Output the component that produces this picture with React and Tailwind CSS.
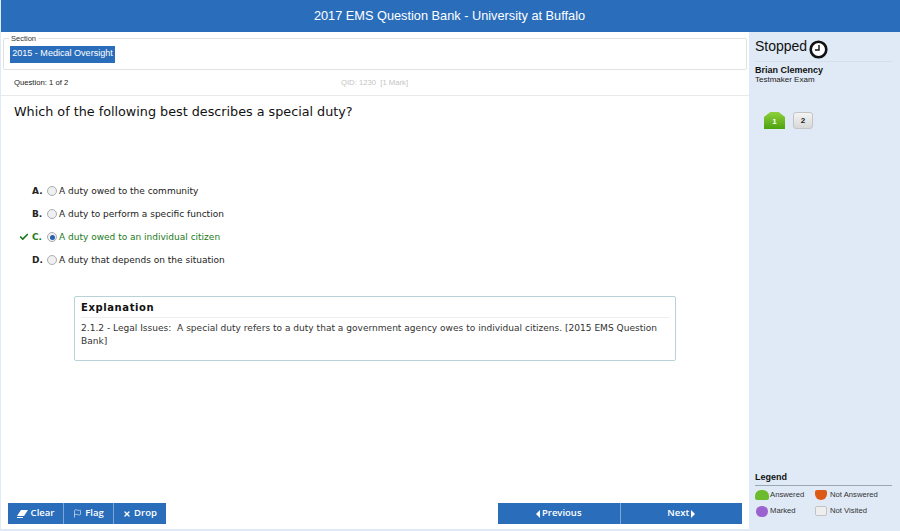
import { Check, X, Flag } from 'lucide-react';

const choices = [
  { letter: 'A.', text: 'A duty owed to the community' },
  { letter: 'B.', text: 'A duty to perform a specific function' },
  { letter: 'C.', text: 'A duty owed to an individual citizen', correct: true },
  { letter: 'D.', text: 'A duty that depends on the situation' },
];

const Radio = ({ checked }) => (
  <span className="flex h-[10px] w-[10px] shrink-0 items-center justify-center rounded-full border border-[#a8aeb4] bg-[#f0f0f0]">
    {checked && <span className="h-[5px] w-[5px] rounded-full bg-[#2a5fb0]" />}
  </span>
);

const Clock = () => (
  <svg width="19" height="19" viewBox="0 0 19 19" className="mt-[3px]">
    <circle cx="9.5" cy="9.5" r="7.8" fill="white" stroke="#111" strokeWidth="2.6" />
    <path d="M10 5v5H6" fill="none" stroke="#111" strokeWidth="1.4" />
  </svg>
);

const EraserIcon = () => (
  <svg width="11" height="8" viewBox="0 0 11 8">
    <path d="M4 0h7L7 6H0z" fill="white" />
    <path d="M0 7h6v1H0z" fill="white" />
  </svg>
);

const App = () => {
  return (
    <div className="flex h-[531px] w-[900px] flex-col overflow-hidden bg-[#e0eaf6] pb-[2px] pl-[1px] font-['Liberation_Sans',sans-serif] text-black">
      <header className="flex h-[32px] shrink-0 items-center justify-center bg-[#2a6ebb] pr-[2px] text-[12.75px] text-white">
        2017 EMS Question Bank - University at Buffalo
      </header>

      <div className="flex min-h-0 flex-1">
        <main className="flex w-[748px] shrink-0 flex-col bg-white">
          <fieldset className="mx-[2px] mt-[1.5px] h-[36.5px] shrink-0 rounded-[2px] border border-[#e2e2e2] pl-[6px]">
            <legend className="-ml-[1px] bg-white px-[2px] text-[7.5px] leading-[9px] text-[#333]">Section</legend>
            <div className="mt-[3px] flex h-[17px] w-[105px] items-center justify-center bg-[#2a6ebb] text-[9.05px] whitespace-nowrap text-white">
              2015 - Medical Oversight
            </div>
          </fieldset>

          <div className="flex h-[26px] shrink-0 items-center border-b border-[#e8e8e8] pl-[13px] text-[7.7px]">
            <span className="w-[327px] text-[#222]">Question: 1 of 2</span>
            <span className="text-[#c4c4c4]">QID: 1230&nbsp; [1 Mark]</span>
          </div>

          <div className="flex min-h-0 flex-1 flex-col font-['DejaVu_Sans',sans-serif]">
            <h1 className="mt-[8px] pl-[13px] text-[12.75px] leading-[16px] font-normal text-[#111]">
              Which of the following best describes a special duty?
            </h1>

            <ul className="mt-[63px] flex flex-col gap-[7px] pl-[18px] text-[9px] leading-[16px] text-[#222]">
              {choices.map((c) => (
                <li key={c.letter} className={`flex items-center ${c.correct ? 'text-[#1b7a1b]' : ''}`}>
                  <span className="w-[13px]">
                    {c.correct && <Check size={10} strokeWidth={4} className="text-[#1b7a1b]" />}
                  </span>
                  <span className="w-[15px] font-bold">{c.letter}</span>
                  <Radio checked={c.correct} />
                  <span className="ml-[2px]">{c.text}</span>
                </li>
              ))}
            </ul>

            <section className="mt-[28px] ml-[73px] h-[65px] w-[602px] rounded-[2px] border border-[#b7d3d8] px-[6px] pt-[4px]">
              <h2 className="border-b border-[#eeeeee] pb-[3px] text-[10px] leading-[13px] font-bold tracking-[0.6px] text-[#111]">
                Explanation
              </h2>
              <p className="mt-[4px] text-[9.05px] leading-[13px] whitespace-pre-wrap text-[#333]">
                {'2.1.2 - Legal Issues:  A special duty refers to a duty that a government agency owes to individual citizens. [2015 EMS Question Bank]'}
              </p>
            </section>

            <div className="mt-auto mb-[5px] flex justify-between pr-[7px] pl-[7px] font-['Open_Sans',sans-serif] text-[9.5px] font-semibold text-white">
              <div className="flex h-[21px] bg-[#2a6ebb]">
                <button className="flex w-[55px] items-center justify-center gap-[3px]">
                  <EraserIcon /> Clear
                </button>
                <button className="flex w-[50px] items-center justify-center gap-[3px] border-l border-[#7ba6d8]">
                  <Flag size={9} strokeWidth={1.5} /> Flag
                </button>
                <button className="flex w-[53px] items-center justify-center gap-[3px] border-l border-[#7ba6d8]">
                  <X size={8} strokeWidth={4} /> Drop
                </button>
              </div>
              <div className="flex h-[21px] w-[244px] bg-[#2a6ebb]">
                <button className="flex flex-1 items-center justify-center gap-[2px]">
                  <span className="h-0 w-0 border-y-[4px] border-r-[4px] border-y-transparent border-r-white" /> Previous
                </button>
                <button className="flex flex-1 items-center justify-center gap-[2px] border-l border-[#7ba6d8]">
                  Next <span className="h-0 w-0 border-y-[4px] border-l-[4px] border-y-transparent border-l-white" />
                </button>
              </div>
            </div>
          </div>
        </main>

        <aside className="flex min-w-0 flex-1 flex-col pr-[8px] pl-[6px]">
          <div className="flex h-[30px] items-start gap-[2px] border-b border-[#d5dfeb] pt-[5px] text-[14px] leading-[18px] text-[#111]">
            Stopped <Clock />
          </div>
          <div className="mt-[3px] text-[9px] leading-[10px] font-bold text-[#111]">Brian Clemency</div>
          <div className="text-[8px] leading-[9px] text-[#222]">Testmaker Exam</div>

          <div className="mt-[28px] ml-[9px] flex items-center gap-[8px] text-[8px] font-bold">
            <span className="flex h-[17px] w-[21px] items-center justify-center bg-gradient-to-b from-[#8fd03a] to-[#4aa30a] pt-[2px] text-white [clip-path:polygon(30%_0,70%_0,100%_30%,100%_100%,0_100%,0_30%)]">
              1
            </span>
            <span className="flex h-[17px] w-[20px] items-center justify-center rounded-[3px] border border-[#c4c4c4] bg-gradient-to-b from-[#f4f4f4] to-[#d8d8d8] text-[#222]">
              2
            </span>
          </div>

          <div className="mt-auto mb-[12px]">
            <div className="border-b border-[#9aa7b5] pb-[2px] text-[9px] leading-[12px] font-bold text-[#111]">Legend</div>
            <div className="mt-[3px] grid grid-cols-[60px_1fr] gap-y-[4px] text-[7.7px] leading-[12px] text-[#333]">
              <span className="flex items-center gap-[1px]">
                <span className="h-[10px] w-[14px] rounded-t-[6px] rounded-b-[2px] bg-[#6cbb2c]" /> Answered
              </span>
              <span className="flex items-center gap-[3px]">
                <span className="h-[10px] w-[12px] rounded-t-[2px] rounded-b-[6px] bg-[#dd5a14]" /> Not Answered
              </span>
              <span className="flex items-center gap-[2px]">
                <span className="ml-[1px] h-[11px] w-[12px] rounded-full bg-[#9a63cf]" /> Marked
              </span>
              <span className="flex items-center gap-[3px]">
                <span className="h-[10px] w-[12px] rounded-[2px] border border-[#c4c4c4] bg-[#eeeeee]" /> Not Visited
              </span>
            </div>
          </div>
        </aside>
      </div>
    </div>
  );
};

export default App;
